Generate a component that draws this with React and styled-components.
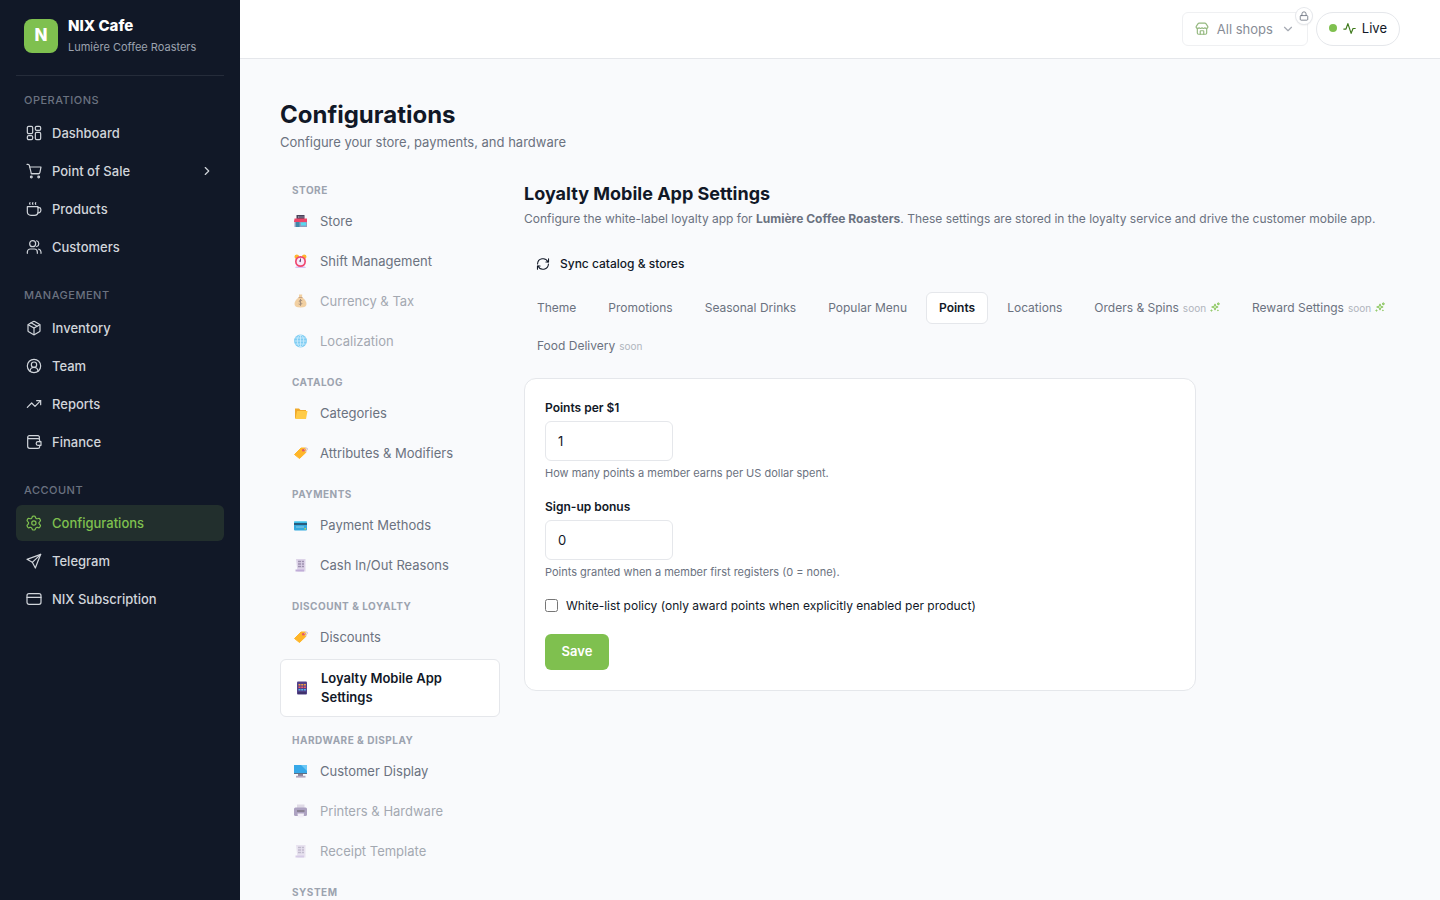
import React from "react";
import styled, { createGlobalStyle, css } from "styled-components";
import { Package, CircleUserRound, TrendingUp, ChevronRight, ChevronDown, Store, Lock } from "lucide-react";

const GlobalStyle = createGlobalStyle`
  *, *::before, *::after { box-sizing: border-box; }
  body {
    margin: 0;
    background: #f9fafc;
    color: #111827;
    font-family: Inter, "Liberation Sans", sans-serif;
    font-size: 14px;
  }
  button, input { font-family: inherit; }
  h1, h2, h3, p, ul { margin: 0; padding: 0; }
  ul { list-style: none; }
`;

const Shell = styled.div`
  display: grid;
  grid-template-columns: 240px minmax(0, 1fr);
  height: 100vh;
  overflow: hidden;
`;

const Sidebar = styled.aside`
  background: #111827;
  padding: 0 16px;
  overflow: hidden;
`;

const Brand = styled.div`
  display: flex;
  align-items: center;
  gap: 10px;
  height: 76px;
  padding: 0 8px 3px;
  border-bottom: 1px solid #252c3a;
`;

const BrandMark = styled.div`
  display: grid;
  place-items: center;
  width: 34px;
  height: 34px;
  border-radius: 8px;
  background: #7fc04f;
  color: #fff;
  font-size: 17px;
  font-weight: 800;
  line-height: 20px;
  padding-bottom: 2px;
`;

const BrandName = styled.div`
  color: #fff;
  font-size: 15px;
  font-weight: 800;
  line-height: 22px;
`;

const BrandSub = styled.div`
  color: #9ca3af;
  font-size: 11px;
  line-height: 20px;
`;

const NavSection = styled.section`
  padding-top: ${(p) => (p.$first ? 16 : 22)}px;
`;

const NavHeading = styled.h2`
  padding: 0 8px;
  margin-bottom: 7px;
  color: #6b7280;
  font-size: 11px;
  font-weight: 500;
  letter-spacing: 0.5px;
  line-height: 16px;
  text-transform: uppercase;
`;

const NavList = styled.ul`
  display: grid;
  gap: 2px;
`;

const NavLink = styled.a`
  display: flex;
  align-items: center;
  gap: 10px;
  height: 36px;
  padding: 0 10px;
  border-radius: 6px;
  background: ${(p) => (p.$active ? "#222f2d" : "transparent")};
  color: ${(p) => (p.$active ? "#7fc04f" : "#d1d5db")};
  font-size: 13px;
  font-weight: 500;
  text-decoration: none;
  svg { flex: none; }
`;

const NavText = styled.span`
  flex: 1;
`;

const Main = styled.div`
  display: flex;
  flex-direction: column;
  min-width: 0;
  overflow: hidden;
`;

const TopBar = styled.header`
  display: flex;
  flex: none;
  align-items: center;
  justify-content: flex-end;
  gap: 8px;
  height: 59px;
  padding: 0 40px;
  background: #fff;
  border-bottom: 1px solid #e5e7eb;
`;

const ShopPicker = styled.div`
  position: relative;
`;

const ShopButton = styled.button`
  display: flex;
  align-items: center;
  gap: 8px;
  height: 34px;
  padding: 0 12px;
  border: 1px solid #e5e7eb;
  border-radius: 6px;
  background: #fff;
  color: #374151;
  font-size: 13px;
  font-weight: 400;
  opacity: 0.6;
`;

const LockBadge = styled.span`
  position: absolute;
  top: -4px;
  right: -4px;
  display: grid;
  place-items: center;
  width: 16px;
  height: 16px;
  border-radius: 50%;
  background: #fff;
  color: #6b7280;
  box-shadow: 0 0 0 1px #e5e7eb, 0 1px 2px rgba(0, 0, 0, 0.15);
`;

const LiveButton = styled.button`
  display: flex;
  align-items: center;
  gap: 6px;
  height: 34px;
  padding: 0 12px 2px;
  border: 1px solid #e5e7eb;
  border-radius: 17px;
  background: #fff;
  color: #111827;
  font-size: 13px;
  font-weight: 400;
`;

const LiveDot = styled.span`
  width: 8px;
  height: 8px;
  border-radius: 50%;
  background: #7fc04f;
`;

const Pulse = styled.span`
  display: flex;
  color: #3f7a1c;
`;

const Content = styled.main`
  flex: 1;
  padding: 40px;
  overflow: hidden;
`;

const PageTitle = styled.h1`
  font-size: 24px;
  font-weight: 700;
  line-height: 32px;
`;

const PageSub = styled.p`
  color: #6b7280;
  font-size: 13px;
  line-height: 22px;
`;

const Columns = styled.div`
  display: grid;
  grid-template-columns: 220px minmax(0, 1fr);
  gap: 24px;
  margin-top: 29px;
`;

const GroupHeading = styled.h3`
  padding: 0 12px;
  margin: 0 0 5px;
  color: #9ca3af;
  font-size: 10px;
  font-weight: 700;
  letter-spacing: 0.5px;
  line-height: 16px;
  text-transform: uppercase;
`;

const Group = styled.section`
  margin-bottom: 15px;
`;

const GroupList = styled.ul`
  display: grid;
  gap: 4px;
`;

const SettingLink = styled.a`
  display: flex;
  align-items: center;
  gap: 11px;
  min-height: 36px;
  padding: 8px 12px;
  border-radius: 6px;
  color: #6b7280;
  font-size: 13px;
  line-height: 19px;
  text-decoration: none;
  opacity: ${(p) => (p.$dim ? 0.6 : 1)};
  svg { flex: none; }
  ${(p) =>
    p.$active &&
    css`
      padding-block: 9px;
      border: 1px solid #e5e7eb;
      background: #fff;
      color: #111827;
      font-weight: 600;
    `}
`;

const SectionTitle = styled.h2`
  font-size: 18px;
  font-weight: 700;
  line-height: 24px;
`;

const SectionSub = styled.p`
  color: #6b7280;
  font-size: 12px;
  line-height: 25px;
  strong { font-weight: 700; }
`;

const SyncButton = styled.button`
  display: flex;
  align-items: center;
  gap: 10px;
  height: 32px;
  margin-top: 17px;
  padding: 0 12px 1px;
  border: 0;
  border-radius: 6px;
  background: transparent;
  color: #111827;
  font-size: 12px;
  font-weight: 500;
`;

const Tabs = styled.div`
  display: flex;
  flex-wrap: wrap;
  gap: 6px;
  margin: 12px 0 16px;
`;

const Tab = styled.button`
  display: flex;
  align-items: center;
  gap: 4px;
  height: 32px;
  padding: 0 12px 2px;
  border: 1px solid ${(p) => (p.$active ? "#e5e7eb" : "transparent")};
  border-radius: 6px;
  background: ${(p) => (p.$active ? "#fff" : "transparent")};
  color: ${(p) => (p.$active ? "#111827" : "#6b7280")};
  font-size: 12px;
  font-weight: ${(p) => (p.$active ? 600 : 400)};
  white-space: nowrap;
`;

const Soon = styled.span`
  color: #b0b5bd;
  font-size: 10px;
  line-height: 12px;
  padding-top: 2px;
`;

const Card = styled.form`
  max-width: 672px;
  padding: 20px;
  border: 1px solid #e5e7eb;
  border-radius: 12px;
  background: #fff;
`;

const Field = styled.div`
  display: flex;
  flex-direction: column;
  align-items: flex-start;
  margin-bottom: 16px;
`;

const FieldLabel = styled.label`
  margin-bottom: 4px;
  font-size: 12px;
  font-weight: 600;
  line-height: 18px;
`;

const NumberInput = styled.input`
  width: 128px;
  height: 40px;
  padding: 0 12px;
  border: 1px solid #e5e7eb;
  border-radius: 6px;
  background: #fff;
  color: #111827;
  font-size: 13px;
`;

const Help = styled.p`
  margin-top: 4px;
  color: #6b7280;
  font-size: 11px;
  line-height: 17px;
`;

const CheckRow = styled.label`
  display: flex;
  align-items: center;
  gap: 8px;
  font-size: 12px;
  line-height: 17px;
  input { width: 13px; height: 13px; margin: 0; }
`;

const SaveButton = styled.button`
  width: 64px;
  height: 36px;
  margin-top: 20px;
  padding: 0 0 2px;
  border: 0;
  border-radius: 6px;
  background: #7fc04f;
  color: #fff;
  font-size: 13px;
  font-weight: 600;
`;

/* Line icons on a 24-unit grid */
const Line = ({ size = 16, w = 1.8, children }) => (
  <svg width={size} height={size} viewBox="0 0 24 24" fill="none" stroke="currentColor" strokeWidth={w} strokeLinecap="round" strokeLinejoin="round" aria-hidden="true">
    {children}
  </svg>
);

const DashboardIcon = () => (
  <Line>
    <rect x="2" y="2" width="8" height="11" rx="2" />
    <rect x="14" y="2" width="8" height="6" rx="2" />
    <rect x="14" y="11" width="8" height="11" rx="2" />
    <rect x="2" y="16" width="8" height="6" rx="2" />
  </Line>
);
const CartIcon = () => (
  <Line>
    <path d="M1.500 2H3c1 0 1.800.7 2 1.600L8 16h11.500" />
    <path d="M5.500 6H22.500l-1.600 8.200c-.2 1.100-1 1.800-2.100 1.800H8" />
    <circle cx="8" cy="21" r="1.300" />
    <circle cx="19" cy="21" r="1.300" />
  </Line>
);
const CupIcon = () => (
  <Line>
    <path d="M2 8.500h16V16c0 3.500-2 5.500-5.500 5.500h-5C4 21.500 2 19.500 2 16z" />
    <path d="M18 10h1.500a2.800 2.800 0 0 1 2.800 2.800V14a3.700 3.700 0 0 1-4.300 3.700" />
    <path d="M6 5c-.7-.7-.7-1.800 0-2.500M10.300 5c-.7-.7-.7-1.800 0-2.500M14.600 5c-.7-.7-.7-1.800 0-2.500" />
  </Line>
);
const UsersIcon = () => (
  <Line>
    <circle cx="10" cy="7" r="4.500" />
    <path d="M2 21.500v-2A4.500 4.500 0 0 1 6.500 15h6a4.500 4.500 0 0 1 4.500 4.500v2" />
    <path d="M16 2.700a4.500 4.500 0 0 1 0 8.600M19 15.300a4.500 4.500 0 0 1 3.500 4.200v2" />
  </Line>
);
const WalletIcon = () => (
  <Line>
    <path d="M20 7V4.500A2 2 0 0 0 18 2.500H5A2.500 2.500 0 0 0 2.500 5v13.500a3 3 0 0 0 3 3H18a2.500 2.500 0 0 0 2.500-2.500v-2M2.500 5A2.300 2.300 0 0 0 5 7h13a2.500 2.500 0 0 1 2.500 2.500v2" />
    <path d="M22.500 11.500H18a2.700 2.700 0 0 0 0 5.500h4.500z" />
  </Line>
);
const GearIcon = () => (
  <Line>
    <path d="M21.300 7.100l-.5-.9c-.4-.6-.6-1-.9-1.100-.4-.2-.8-.1-1.500.1l-1.300.4c-.5.100-1 0-1.400-.2l-.4-.2c-.4-.3-.7-.6-.9-1.100L14 3.100c-.2-.7-.3-1-.6-1.200-.3-.2-.6-.2-1.200-.2h-1.100c-.6 0-.9 0-1.200.2-.3.200-.4.500-.6 1.200l-.4 1c-.2.500-.5.800-.9 1.100l-.4.200c-.4.200-.9.300-1.400.2l-1.300-.4c-.7-.2-1.100-.3-1.500-.1-.3.100-.5.500-.9 1.100l-.5.900c-.3.600-.5.900-.4 1.300 0 .3.300.6.700 1.100l1.100 1.200c.3.300.5.900.5 1.400s-.2 1-.5 1.400l-1.100 1.200c-.4.500-.7.800-.7 1.100-.1.400.1.700.4 1.300l.5.900c.4.600.6 1 .9 1.100.4.200.8.100 1.500-.1l1.300-.4c.5-.1 1 0 1.400.2l.4.200c.4.300.7.600.9 1.100l.4 1c.2.700.3 1 .6 1.200.3.200.6.200 1.200.2h1.100c.6 0 .9 0 1.200-.2.3-.2.400-.5.600-1.200l.4-1c.2-.5.500-.8.900-1.100l.4-.2c.4-.2.900-.3 1.400-.2l1.300.4c.7.200 1.100.3 1.500.1.300-.1.500-.5.900-1.100l.5-.9c.3-.6.500-.9.400-1.300 0-.3-.3-.6-.7-1.100l-1.100-1.200c-.3-.4-.5-.9-.5-1.400s.2-1.100.5-1.400l1.100-1.200c.4-.5.700-.8.700-1.100.1-.4-.1-.7-.4-1.300z" />
    <circle cx="11.800" cy="12" r="3.200" />
  </Line>
);
const SendIcon = () => (
  <Line>
    <path d="M22 2L1.500 9.500 9.500 14 14 22.500z" />
    <path d="M22 2L9.500 14" />
  </Line>
);
const CardIcon = () => (
  <Line>
    <rect x="1.500" y="4" width="21" height="16" rx="3" />
    <path d="M1.500 9.500h21" />
  </Line>
);
const RefreshIcon = () => (
  <Line size={14}>
    <path d="M21.500 3v5.500H17" />
    <path d="M20.500 8.500A9.300 9.300 0 0 0 2.700 12" />
    <path d="M2.500 21v-5.500H7" />
    <path d="M3.500 15.500A9.300 9.300 0 0 0 21.300 12" />
  </Line>
);
const PulseIcon = () => (
  <Line size={13} w={2.200}>
    <path d="M1.500 13h4L9 3l6 18 3.500-9h4" />
  </Line>
);
const SparkleIcon = () => (
  <svg width="10" height="10" viewBox="0 0 24 24" fill="#d5ecc3" stroke="#7fc04f" strokeWidth="2" strokeLinejoin="round" aria-hidden="true">
    <path d="M12 4.500l2 5.500 5.500 2-5.500 2-2 5.500-2-5.500-6-2 6-2z" />
    <path d="M20 1.500l.8 2.200 2.200.8-2.200.8-.8 2.200-.8-2.200-2.200-.8 2.200-.8z" />
    <circle cx="3.500" cy="20.500" r="1.500" />
    <circle cx="19" cy="20" r="1" />
  </svg>
);

/* Small colour pictograms of the settings menu */
const Picto = ({ children }) => (
  <svg width="17" height="16" viewBox="0 0 17 16" aria-hidden="true">{children}</svg>
);

const pictos = {
  store: (
    <Picto>
      <rect x="2.500" y="7" width="12.500" height="7" fill="#8e9fc0" />
      <rect x="4" y="9" width="3.500" height="5" fill="#3f87a8" />
      <rect x="9" y="9.500" width="5" height="3" fill="#59d8ee" />
      <rect x="4.500" y="2" width="8" height="4" fill="#4b4159" />
      <path d="M6 4h1.500M8.500 4h1M10.500 4h1" stroke="#cfc6dc" />
      <path d="M2.500 5.500h12.500V9H2z" fill="#ed4568" />
    </Picto>
  ),
  clock: (
    <Picto>
      <path d="M4 13.500h9l1 1.500H3z" fill="#d8c2f5" />
      <circle cx="4.800" cy="3.800" r="2.300" fill="#ffb52e" />
      <circle cx="12.200" cy="3.800" r="2.300" fill="#ffb52e" />
      <circle cx="8.500" cy="8.500" r="5.500" fill="#f0466f" />
      <circle cx="8.500" cy="8.500" r="3.800" fill="#f6eafa" />
      <path d="M8.500 5.500v3.200l-1.500-1" fill="none" stroke="#6b4a76" />
    </Picto>
  ),
  money: (
    <Picto>
      <path d="M7 1.500h3.200L10 4.500c3 1.500 4.500 4 4.500 6.500 0 2.500-2 3.500-6 3.500s-6-1-6-3.500C2.500 8.500 4 6 7 4.500z" fill="#efb568" />
      <path d="M6.500 4.500h4" stroke="#a86b35" />
      <path d="M10.200 7.700c-2.500-1.200-4.200.6-2 1.700 2.800.8 1.500 3-1.500 1.600M8.500 6v6.800" fill="none" stroke="#6f4a2c" />
    </Picto>
  ),
  globe: (
    <Picto>
      <circle cx="8.500" cy="8" r="6.500" fill="#2fb0ee" />
      <path d="M2.500 8h12M3.500 5h10M3.500 11h10M8.500 2v12" stroke="#c4ecff" strokeWidth=".7" />
      <ellipse cx="8.500" cy="8" rx="3.200" ry="6" fill="none" stroke="#c4ecff" strokeWidth=".7" />
    </Picto>
  ),
  folder: (
    <Picto>
      <path d="M3 3.500h4l1.500 1.500H14v8.500H3z" fill="#f0a92b" />
      <path d="M5 6h10.500L14 14H3.500z" fill="#ffcb48" />
    </Picto>
  ),
  tag: (
    <Picto>
      <path d="M9 3h4.800v4.500L7.500 13.500 2.500 9.500z" fill="#ffb629" stroke="#ffb629" strokeLinejoin="round" />
      <path d="M12 5c1-2 3-2.500 3.500-1.500S14.500 6 13 6.500" fill="none" stroke="#cdbfe0" />
      <circle cx="11.300" cy="5.300" r="1.300" fill="#e2566d" />
    </Picto>
  ),
  card: (
    <Picto>
      <rect x="2" y="4.500" width="13" height="9" rx="1" fill="#35a9dd" />
      <path d="M2 5h13" stroke="#4ed3f2" />
      <path d="M2 7h13" stroke="#23435c" strokeWidth="1.500" />
      <path d="M4 10h8" stroke="#8fcbe6" />
      <rect x="12.500" y="11" width="1.500" height="1.500" fill="#bada55" />
    </Picto>
  ),
  receipt: (
    <Picto>
      <path d="M4 2h9.500v12.500h-8z" fill="#ddd3e8" />
      <path d="M3.500 12.500h8.500v2H3.500z" fill="#c0add8" />
      <path d="M6 4.500h6M6 7h6M6 9.500h6" stroke="#9d90ae" strokeWidth="1.500" />
      <path d="M9.500 3.500v7" stroke="#ddd3e8" strokeWidth=".8" />
    </Picto>
  ),
  phone: (
    <Picto>
      <rect x="4" y="1.500" width="10" height="13" rx="1" fill="#51408a" />
      <path d="M5.500 4.800h7.500" stroke="#f5a142" strokeWidth="1.600" strokeDasharray="2 .7" />
      <path d="M5.500 7.300h7.500" stroke="#ef5b65" strokeWidth="1.600" strokeDasharray="2 .7" />
      <path d="M5.500 9.800h7.500" stroke="#52b7ea" strokeWidth="1.600" strokeDasharray="2 .7" />
      <path d="M5 13h8" stroke="#30264f" />
    </Picto>
  ),
  display: (
    <Picto>
      <rect x="2" y="2" width="13" height="9" fill="#37a8e8" />
      <path d="M15 2v6L9 2z" fill="#6cc8f6" />
      <path d="M2 10.500h13" stroke="#5c6f86" />
      <rect x="6" y="11" width="5" height="2" fill="#8d8398" />
      <rect x="4" y="12.800" width="9.500" height="1.800" fill="#b1a6bd" />
    </Picto>
  ),
  printer: (
    <Picto>
      <rect x="5" y="1.500" width="7.500" height="5" fill="#cfc6d9" />
      <rect x="2" y="4.500" width="13" height="8.500" rx="1.500" fill="#7c689b" />
      <rect x="5" y="7" width="7.500" height="2" fill="#41324f" />
      <path d="M5.500 10.500h6.500l-.5 4H6z" fill="#f1ebf7" />
    </Picto>
  ),
};

const lucide = { size: 16, strokeWidth: 1.8 };

const navigation = [
  ["Operations", [
    ["Dashboard", <DashboardIcon />],
    ["Point of Sale", <CartIcon />, { more: true }],
    ["Products", <CupIcon />],
    ["Customers", <UsersIcon />],
  ]],
  ["Management", [
    ["Inventory", <Package {...lucide} />],
    ["Team", <CircleUserRound {...lucide} />],
    ["Reports", <TrendingUp {...lucide} />],
    ["Finance", <WalletIcon />],
  ]],
  ["Account", [
    ["Configurations", <GearIcon />, { active: true }],
    ["Telegram", <SendIcon />],
    ["NIX Subscription", <CardIcon />],
  ]],
];

const settings = [
  ["Store", [["Store", "store"], ["Shift Management", "clock"], ["Currency & Tax", "money", "dim"], ["Localization", "globe", "dim"]]],
  ["Catalog", [["Categories", "folder"], ["Attributes & Modifiers", "tag"]]],
  ["Payments", [["Payment Methods", "card"], ["Cash In/Out Reasons", "receipt"]]],
  ["Discount & Loyalty", [["Discounts", "tag"], ["Loyalty Mobile App Settings", "phone", "active"]]],
  ["Hardware & Display", [["Customer Display", "display"], ["Printers & Hardware", "printer", "dim"], ["Receipt Template", "receipt", "dim"]]],
  ["System", []],
];

const tabs = [
  { name: "Theme" },
  { name: "Promotions" },
  { name: "Seasonal Drinks" },
  { name: "Popular Menu" },
  { name: "Points", active: true },
  { name: "Locations" },
  { name: "Orders & Spins", soon: true, sparkle: true },
  { name: "Reward Settings", soon: true, sparkle: true },
  { name: "Food Delivery", soon: true },
];

export default function App() {
  return (
    <>
      <GlobalStyle />
      <Shell>
        <Sidebar>
          <Brand>
            <BrandMark>N</BrandMark>
            <div>
              <BrandName>NIX Cafe</BrandName>
              <BrandSub>Lumière Coffee Roasters</BrandSub>
            </div>
          </Brand>
          <nav aria-label="Main">
            {navigation.map(([title, items], i) => (
              <NavSection key={title} $first={i === 0}>
                <NavHeading>{title}</NavHeading>
                <NavList>
                  {items.map(([name, icon, opts = {}]) => (
                    <li key={name}>
                      <NavLink href="#" $active={opts.active}>
                        {icon}
                        <NavText>{name}</NavText>
                        {opts.more && <ChevronRight size={14} />}
                      </NavLink>
                    </li>
                  ))}
                </NavList>
              </NavSection>
            ))}
          </nav>
        </Sidebar>
        <Main>
          <TopBar>
            <ShopPicker>
              <ShopButton type="button" disabled>
                <Store size={14} color="#4f8a2b" />
                All shops
                <ChevronDown size={14} color="#6b7280" />
              </ShopButton>
              <LockBadge><Lock size={10} /></LockBadge>
            </ShopPicker>
            <LiveButton type="button">
              <LiveDot />
              <Pulse><PulseIcon /></Pulse>
              Live
            </LiveButton>
          </TopBar>
          <Content>
            <PageTitle>Configurations</PageTitle>
            <PageSub>Configure your store, payments, and hardware</PageSub>
            <Columns>
              <nav aria-label="Settings">
                {settings.map(([title, items]) => (
                  <Group key={title}>
                    <GroupHeading>{title}</GroupHeading>
                    <GroupList>
                      {items.map(([name, icon, state]) => (
                        <li key={name}>
                          <SettingLink href="#" $dim={state === "dim"} $active={state === "active"}>
                            {pictos[icon]}
                            <span>{name}</span>
                          </SettingLink>
                        </li>
                      ))}
                    </GroupList>
                  </Group>
                ))}
              </nav>
              <section>
                <SectionTitle>Loyalty Mobile App Settings</SectionTitle>
                <SectionSub>
                  Configure the white-label loyalty app for <strong>Lumière Coffee Roasters</strong>. These settings are stored in the loyalty service and drive the customer mobile app.
                </SectionSub>
                <SyncButton type="button"><RefreshIcon />Sync catalog &amp; stores</SyncButton>
                <Tabs>
                  {tabs.map((tab) => (
                    <Tab key={tab.name} type="button" $active={tab.active}>
                      {tab.name}
                      {tab.soon && <Soon>soon</Soon>}
                      {tab.sparkle && <SparkleIcon />}
                    </Tab>
                  ))}
                </Tabs>
                <Card>
                  <Field>
                    <FieldLabel htmlFor="rate">Points per $1</FieldLabel>
                    <NumberInput id="rate" inputMode="numeric" defaultValue="1" />
                    <Help>How many points a member earns per US dollar spent.</Help>
                  </Field>
                  <Field>
                    <FieldLabel htmlFor="bonus">Sign-up bonus</FieldLabel>
                    <NumberInput id="bonus" inputMode="numeric" defaultValue="0" />
                    <Help>Points granted when a member first registers (0 = none).</Help>
                  </Field>
                  <CheckRow>
                    <input type="checkbox" />
                    White-list policy (only award points when explicitly enabled per product)
                  </CheckRow>
                  <SaveButton type="button">Save</SaveButton>
                </Card>
              </section>
            </Columns>
          </Content>
        </Main>
      </Shell>
    </>
  );
}
